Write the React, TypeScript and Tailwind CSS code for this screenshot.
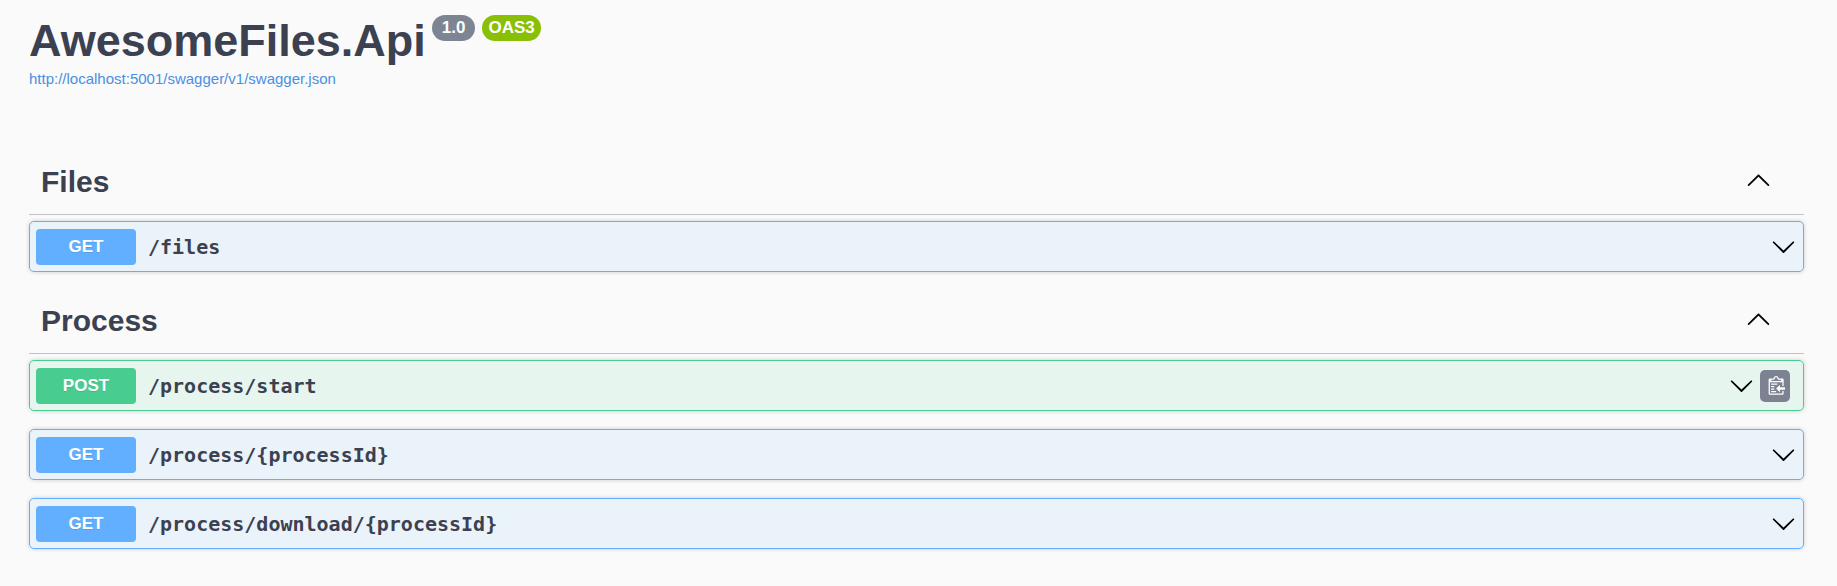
import { useState } from "react";

type Method = "GET" | "POST";

interface Operation {
  method: Method;
  path: string;
  copyable?: boolean;
}

interface Tag {
  name: string;
  operations: Operation[];
}

const tags: Tag[] = [
  { name: "Files", operations: [{ method: "GET", path: "/files" }] },
  {
    name: "Process",
    operations: [
      { method: "POST", path: "/process/start", copyable: true },
      { method: "GET", path: "/process/{processId}" },
      { method: "GET", path: "/process/download/{processId}" },
    ],
  },
];

const rowStyles: Record<Method, string> = {
  GET: "border-[#61affe] bg-[rgba(97,175,254,0.1)]",
  POST: "border-[#49cc90] bg-[rgba(73,204,144,0.1)]",
};

const methodStyles: Record<Method, string> = {
  GET: "bg-[#61affe]",
  POST: "bg-[#49cc90]",
};

function ArrowUp() {
  return (
    <svg className="size-[25px] shrink-0" viewBox="0 0 20 20" fill="black" aria-hidden="true">
      <path d="M 17.418 14.908 C 17.69 15.176 18.127 15.176 18.397 14.908 C 18.667 14.64 18.668 14.207 18.397 13.939 L 10.489 6.109 C 10.219 5.841 9.782 5.841 9.51 6.109 L 1.602 13.939 C 1.332 14.207 1.332 14.64 1.602 14.908 C 1.873 15.176 2.311 15.176 2.581 14.908 L 10 7.767 L 17.418 14.908 Z" />
    </svg>
  );
}

function ArrowDown() {
  return (
    <svg className="size-[25px] shrink-0" viewBox="0 0 20 20" fill="black" aria-hidden="true">
      <path d="M17.418 6.109c.272-.268.709-.268.979 0s.271.701 0 .969l-7.908 7.83c-.27.268-.707.268-.979 0l-7.908-7.83c-.27-.268-.27-.701 0-.969.271-.268.709-.268.979 0L10 13.25l7.418-7.141z" />
    </svg>
  );
}

function ClipboardIcon() {
  return (
    <svg className="h-5 w-[19px]" viewBox="0 0 15 16" fill="white" aria-hidden="true">
      <g transform="translate(2 -1)">
        <path
          fillRule="evenodd"
          d="M2 13h4v1H2v-1zm5-6H2v1h5V7zm2 3V8l-3 3 3 3v-2h5v-2H9zM4.5 9H2v1h2.5V9zM2 12h2.5v-1H2v1zm9 1h1v2c-.02.28-.11.52-.3.7-.19.18-.42.28-.7.3H1c-.55 0-1-.45-1-1V4c0-.55.45-1 1-1h3c0-1.11.89-2 2-2 1.11 0 2 .89 2 2h3c.55 0 1 .45 1 1v5h-1V6H1v9h10v-2zM2 5h8c0-.55-.45-1-1-1H8c-.55 0-1-.45-1-1s-.45-1-1-1-1 .45-1 1-.45 1-1 1H3c-.55 0-1 .45-1 1z"
        />
      </g>
    </svg>
  );
}

function OperationRow({ method, path, copyable }: Operation) {
  return (
    <div
      className={`flex min-h-[51px] items-center rounded-[5px] border pr-[7px] pl-1.5 shadow-[0_0_4px_rgba(0,0,0,0.19)] ${rowStyles[method]}`}
    >
      <button type="button" className="flex min-w-0 flex-1 cursor-pointer items-center text-left">
        <span
          className={`flex h-9 w-[100px] shrink-0 items-center justify-center rounded text-[17px] font-bold text-white [text-shadow:0_1px_0_rgba(0,0,0,0.1)] ${methodStyles[method]}`}
        >
          {method}
        </span>
        <span className="min-w-0 flex-1 px-3 font-['DejaVu_Sans_Mono',monospace] text-xl font-semibold break-words">
          {path}
        </span>
        <ArrowDown />
      </button>
      {copyable && (
        <button
          type="button"
          aria-label="Copy to clipboard"
          className="mx-1.5 flex h-8 w-[30px] cursor-pointer items-center justify-center rounded-[5px] bg-[#7d8293]"
        >
          <ClipboardIcon />
        </button>
      )}
    </div>
  );
}

function TagSection({ name, operations }: Tag) {
  const [open, setOpen] = useState(true);
  return (
    <section className="pb-[18px]">
      <h3 className="border-b border-[rgba(59,65,81,0.3)]">
        <button
          type="button"
          aria-expanded={open}
          onClick={() => setOpen(!open)}
          className="flex h-[63px] w-full cursor-pointer items-center justify-between pr-[33px] pb-0.5 pl-3 text-left"
        >
          <span className="text-3xl font-bold">{name}</span>
          <span className="pb-1">{open ? <ArrowUp /> : <ArrowDown />}</span>
        </button>
      </h3>
      {open && (
        <div className="flex flex-col gap-[18px] pt-1.5">
          {operations.map((op) => (
            <OperationRow key={op.path} {...op} />
          ))}
        </div>
      )}
    </section>
  );
}

export default function App() {
  return (
    <div className="min-h-screen bg-[#fafafa] pr-[33px] pl-[29px] font-['Liberation_Sans',Arial,sans-serif] text-[#3b4151]">
      <header className="pt-3.5 pb-[62px]">
        <div className="flex items-start gap-1.5">
          <h1 className="text-[45px] leading-[54px] font-bold">AwesomeFiles.Api</h1>
          <div className="flex gap-[7px] pt-px text-[17px] leading-[26px] font-bold text-white">
            <span className="h-[26px] rounded-full bg-[#7d8492] px-2.5">1.0</span>
            <span className="h-[26px] rounded-full bg-[#89bf04] px-1.5">OAS3</span>
          </div>
        </div>
        <a
          href="http://localhost:5001/swagger/v1/swagger.json"
          className="mt-px block w-fit text-[15px] leading-5 text-[#4990e2]"
        >
          http://localhost:5001/swagger/v1/swagger.json
        </a>
      </header>
      <main>
        {tags.map((tag) => (
          <TagSection key={tag.name} {...tag} />
        ))}
      </main>
    </div>
  );
}
